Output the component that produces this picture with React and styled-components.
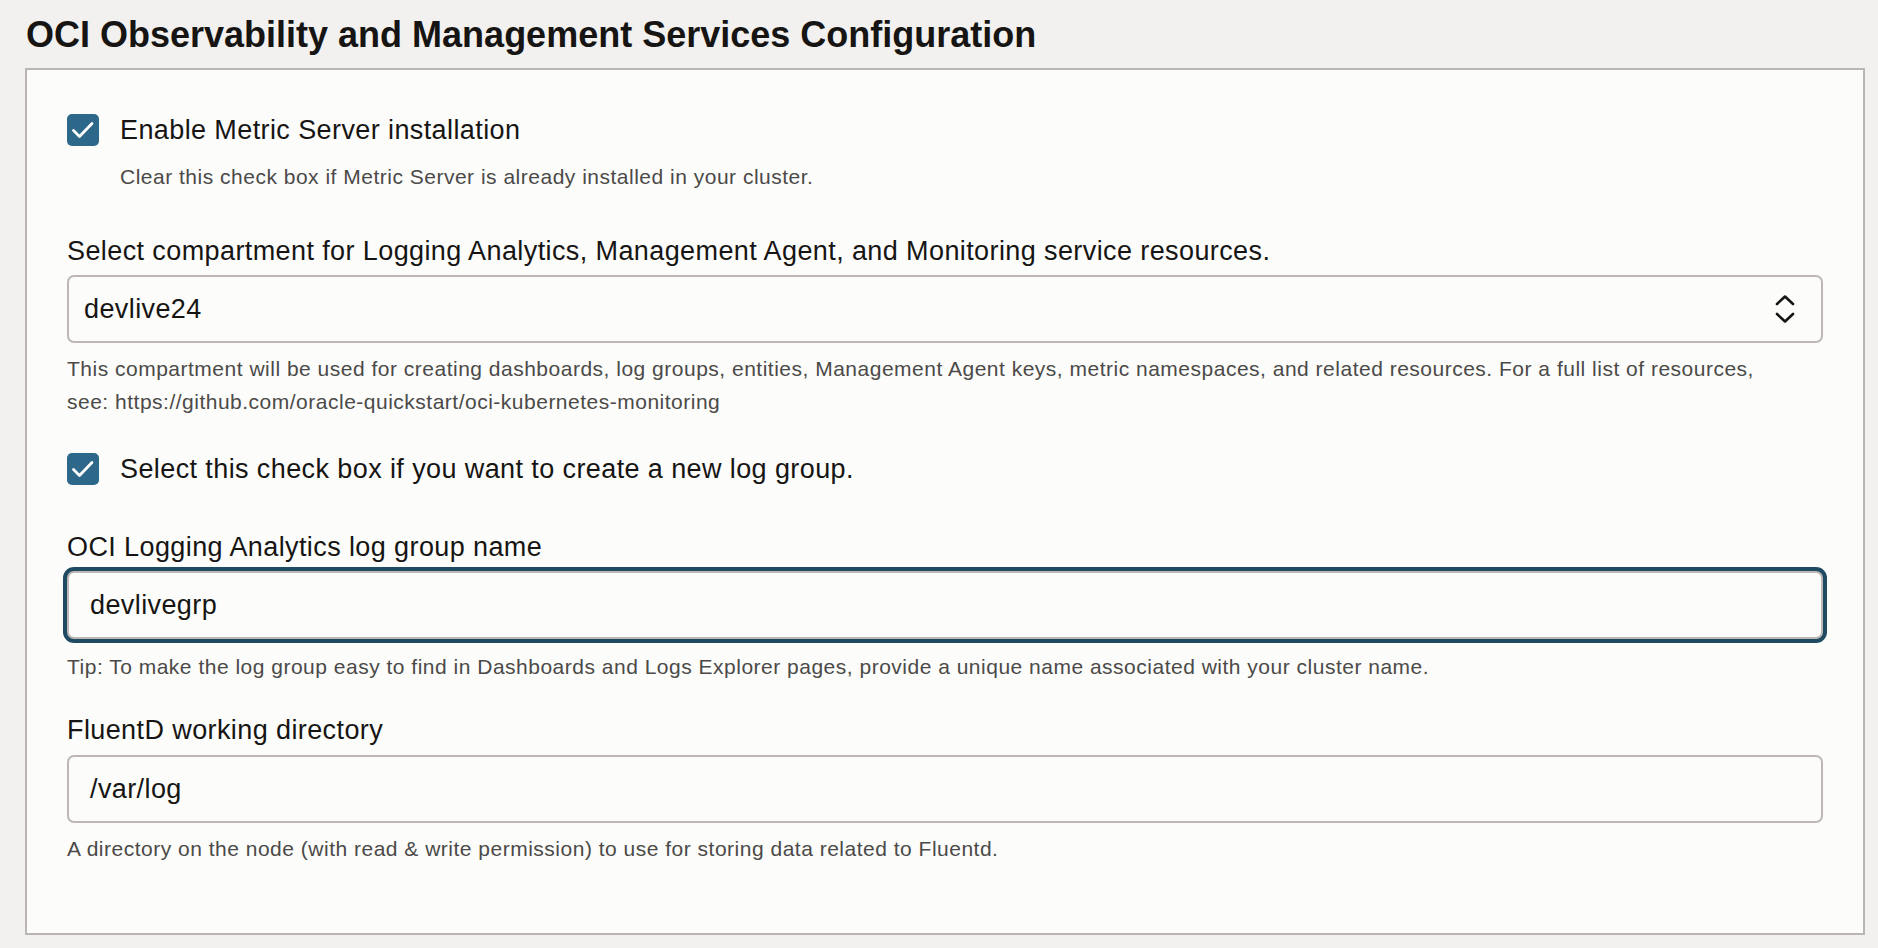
import React from 'react';
import styled, { createGlobalStyle } from 'styled-components';

const GlobalStyle = createGlobalStyle`
  html, body {
    margin: 0;
    padding: 0;
    background: #f2f1ef;
  }
  body {
    font-family: "Liberation Sans", Arial, sans-serif;
    color: #161513;
  }
`;

const Page = styled.div`
  width: 1878px;
  height: 948px;
  box-sizing: border-box;
  padding: 0 0 0 25px;
  overflow: hidden;
`;

const Title = styled.h1`
  margin: 0;
  height: 68px;
  box-sizing: border-box;
  padding: 7px 0 0 1px;
  font-size: 36px;
  line-height: 56px;
  font-weight: 700;
  color: #161513;
`;

const Panel = styled.section`
  width: 1840px;
  height: 867px;
  box-sizing: border-box;
  background: #fcfcfb;
  border: 2px solid #b9b6b1;
  padding: 44px 40px 0 40px;
  display: flex;
  flex-direction: column;
`;

const CheckRow = styled.label`
  display: flex;
  align-items: center;
  gap: 21px;
  height: 32px;
  margin-top: ${p => p.$top || 0}px;
  font-size: 27px;
  letter-spacing: 0.4px;
  color: #161513;
`;

const Box = styled.span`
  width: 32px;
  height: 32px;
  border-radius: 5px;
  background: #2d6789;
  display: flex;
  align-items: center;
  justify-content: center;
  flex-shrink: 0;
`;

const Help = styled.div`
  margin-top: ${p => p.$top || 0}px;
  margin-left: ${p => p.$indent || 0}px;
  font-size: 21px;
  letter-spacing: 0.5px;
  line-height: 33px;
  color: #4b4a48;
  white-space: nowrap;
`;

const FieldLabel = styled.div`
  margin-top: ${p => p.$top || 0}px;
  font-size: 27px;
  letter-spacing: 0.4px;
  line-height: 32px;
  color: #161513;
`;

const Control = styled.div`
  margin-top: ${p => p.$top || 8}px;
  height: 68px;
  box-sizing: border-box;
  border: 2px solid #bdb8b3;
  border-radius: 7px;
  background: #fcfcfb;
  display: flex;
  align-items: center;
  justify-content: space-between;
  padding: 0 26px 0 ${p => p.$pad || 21}px;
  font-size: 27px;
  letter-spacing: 0.4px;
  color: #161513;
  box-shadow: ${p => (p.$focused ? '0 0 0 4px #1e4a62' : 'none')};
`;

const Chevrons = () => (
  <svg width="20" height="30" viewBox="0 0 20 30" fill="none" stroke="#161513" strokeWidth="2.6" strokeLinecap="round" strokeLinejoin="round">
    <path d="M2 10 L10 2.5 L18 10" />
    <path d="M2 20 L10 27.5 L18 20" />
  </svg>
);

const Check = () => (
  <svg width="32" height="32" viewBox="0 0 32 32" fill="none" stroke="#ffffff" strokeWidth="2.8" strokeLinecap="round" strokeLinejoin="round">
    <path d="M6.5 16.5 L12.5 22.5 L25 9.5" />
  </svg>
);

const Checkbox = ({ top, children }) => (
  <CheckRow $top={top}>
    <Box><Check /></Box>
    <span>{children}</span>
  </CheckRow>
);

export default function App() {
  return (
    <>
      <GlobalStyle />
      <Page>
        <Title>OCI Observability and Management Services Configuration</Title>
        <Panel>
          <Checkbox>Enable Metric Server installation</Checkbox>
          <Help $top={14} $indent={53}>Clear this check box if Metric Server is already installed in your cluster.</Help>

          <FieldLabel $top={42}>Select compartment for Logging Analytics, Management Agent, and Monitoring service resources.</FieldLabel>
          <Control $pad={15}>
            <span>devlive24</span>
            <Chevrons />
          </Control>
          <Help $top={9}>
            This compartment will be used for creating dashboards, log groups, entities, Management Agent keys, metric namespaces, and related resources. For a full list of resources,<br />
            see: https://github.com/oracle-quickstart/oci-kubernetes-monitoring
          </Help>

          <Checkbox top={35}>Select this check box if you want to create a new log group.</Checkbox>

          <FieldLabel $top={46}>OCI Logging Analytics log group name</FieldLabel>
          <Control $top={8} $focused>
            <span>devlivegrp</span>
          </Control>
          <Help $top={11}>Tip: To make the log group easy to find in Dashboards and Logs Explorer pages, provide a unique name associated with your cluster name.</Help>

          <FieldLabel $top={31}>FluentD working directory</FieldLabel>
          <Control $top={9}>
            <span>/var/log</span>
          </Control>
          <Help $top={9}>A directory on the node (with read &amp; write permission) to use for storing data related to Fluentd.</Help>
        </Panel>
      </Page>
    </>
  );
}
